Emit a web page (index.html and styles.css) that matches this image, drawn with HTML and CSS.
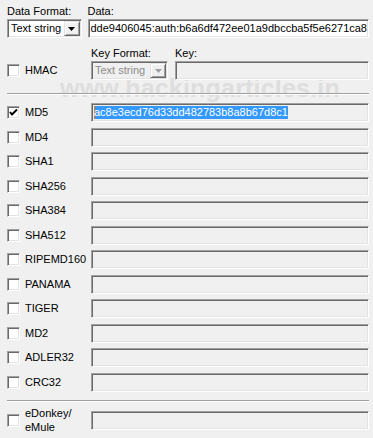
FILE: index.html
```html
<!DOCTYPE html>
<html lang="en">
<head>
    <meta charset="UTF-8">
    <title>HashCalc</title>
    <link rel="stylesheet" href="styles.css">
</head>
<body>

<div class="panel">
    <div class="watermark">www.hackingarticles.in</div>

    <div class="top-row">
        <div class="field data-format">
            <span class="caption">Data Format:</span>
            <div class="combo">
                <span class="combo-text">Text string</span>
                <span class="combo-btn"><svg width="7" height="4" viewBox="0 0 7 4"><polygon points="0,0 7,0 3.5,4" fill="#000"/></svg></span>
            </div>
        </div>
        <div class="field data">
            <span class="caption">Data:</span>
            <div class="edit white">dde9406045:auth:b6a6df472ee01a9dbccba5f5e6271ca8</div>
        </div>
    </div>

    <div class="key-row">
        <label class="check hmac"><span class="box"></span>HMAC</label>
        <div class="field key-format">
            <span class="caption">Key Format:</span>
            <div class="combo disabled">
                <span class="combo-text">Text string</span>
                <span class="combo-btn"><svg width="7" height="4" viewBox="0 0 7 4"><polygon points="0,0 7,0 3.5,4" fill="#a0a0a0"/></svg></span>
            </div>
        </div>
        <div class="field key">
            <span class="caption">Key:</span>
            <div class="edit"></div>
        </div>
    </div>

    <div class="separator first"></div>

    <div class="hash-list">
        <div class="hash-row">
            <label class="check"><span class="box"><svg width="9" height="9" viewBox="0 0 9 9"><polyline points="1,4 3,6.5 8,1.5" fill="none" stroke="#000" stroke-width="2"/></svg></span>MD5</label>
            <div class="edit"><span class="selected">ac8e3ecd76d33dd482783b8a8b67d8c1</span></div>
        </div>
        <div class="hash-row">
            <label class="check"><span class="box"></span>MD4</label>
            <div class="edit"></div>
        </div>
        <div class="hash-row">
            <label class="check"><span class="box"></span>SHA1</label>
            <div class="edit"></div>
        </div>
        <div class="hash-row">
            <label class="check"><span class="box"></span>SHA256</label>
            <div class="edit"></div>
        </div>
        <div class="hash-row">
            <label class="check"><span class="box"></span>SHA384</label>
            <div class="edit"></div>
        </div>
        <div class="hash-row">
            <label class="check"><span class="box"></span>SHA512</label>
            <div class="edit"></div>
        </div>
        <div class="hash-row">
            <label class="check"><span class="box"></span>RIPEMD160</label>
            <div class="edit"></div>
        </div>
        <div class="hash-row">
            <label class="check"><span class="box"></span>PANAMA</label>
            <div class="edit"></div>
        </div>
        <div class="hash-row">
            <label class="check"><span class="box"></span>TIGER</label>
            <div class="edit"></div>
        </div>
        <div class="hash-row">
            <label class="check"><span class="box"></span>MD2</label>
            <div class="edit"></div>
        </div>
        <div class="hash-row">
            <label class="check"><span class="box"></span>ADLER32</label>
            <div class="edit"></div>
        </div>
        <div class="hash-row">
            <label class="check"><span class="box"></span>CRC32</label>
            <div class="edit"></div>
        </div>
    </div>

    <div class="separator second"></div>

    <div class="hash-row tall">
        <label class="check"><span class="box"></span><span class="two-line">eDonkey/<br>eMule</span></label>
        <div class="edit"></div>
    </div>
</div>

</body>
</html>
```

FILE: styles.css
```css
body {
    margin: 0;
    background-color: #f0f0f0;
    font-family: "Liberation Sans", Arial, sans-serif;
    font-size: 11px;
    color: #000;
}
.panel {
    position: relative;
    padding: 5px 4px 0 7px;
}
.watermark {
    position: absolute;
    left: 60px;
    top: 80px;
    z-index: -1;
    font-size: 25px;
    line-height: 17px;
    font-weight: bold;
    letter-spacing: 0.2px;
    color: #dedede;
    white-space: nowrap;
}
.caption {
    display: block;
    height: 13px;
    line-height: 13px;
    margin-bottom: 1px;
    white-space: nowrap;
}
.top-row,
.key-row {
    display: flex;
}
.data-format {
    width: 78px;
}
.data {
    flex: 1;
    margin-left: 6px;
}
.key-row {
    margin-top: 9px;
    align-items: flex-end;
}
.hmac {
    width: 84px;
    margin-bottom: 3px;
}
.key-format {
    width: 77px;
}
.key {
    flex: 1;
    margin-left: 7px;
}

/* sunken 3d controls */
.combo,
.edit,
.box {
    box-sizing: border-box;
    border: 1px solid;
    border-color: #a0a0a0 #fff #fff #a0a0a0;
    box-shadow: inset 1px 1px #696969, inset -1px -1px #e3e3e3;
}
.combo {
    display: flex;
    height: 19px;
    padding: 1px;
    background-color: #fff;
}
.combo-text {
    flex: 1;
    padding-left: 2px;
    line-height: 15px;
    white-space: nowrap;
    overflow: hidden;
}
.combo-btn {
    box-sizing: border-box;
    width: 16px;
    display: flex;
    align-items: center;
    justify-content: center;
    background-color: #f0f0f0;
    border: 1px solid;
    border-color: #e3e3e3 #696969 #696969 #e3e3e3;
    box-shadow: inset 1px 1px #fff, inset -1px -1px #a0a0a0;
}
.combo.disabled {
    background-color: #f0f0f0;
    color: #8c8c8c;
}
.edit {
    height: 19px;
    padding: 2px 1px 0 2px;
    line-height: 13px;
    background-color: #f0f0f0;
    white-space: nowrap;
    overflow: hidden;
}
.edit.white {
    background-color: #fff;
}
.selected {
    display: inline-block;
    background-color: #3399ff;
    color: #fff;
    box-shadow: inset 1px 0 #e07a10;
}

.separator {
    height: 0;
    border-top: 1px solid #a0a0a0;
    border-bottom: 1px solid #fff;
}
.separator.first {
    margin: 13px 0 8px 0;
}
.separator.second {
    margin: 8.5px 0 0 0;
}

.hash-list {
    display: flex;
    flex-direction: column;
    gap: 5.5px;
}
.hash-row {
    display: flex;
    align-items: center;
    height: 19px;
}
.hash-row.tall {
    height: 28px;
    margin-top: 4px;
}
.check {
    display: flex;
    align-items: center;
    gap: 5px;
    width: 84px;
    flex-shrink: 0;
    line-height: 13px;
}
.hash-row .edit {
    flex: 1;
}
.box {
    width: 13px;
    height: 13px;
    flex-shrink: 0;
    background-color: #fff;
    display: flex;
    align-items: center;
    justify-content: center;
}
.two-line {
    line-height: 14px;
}
```
